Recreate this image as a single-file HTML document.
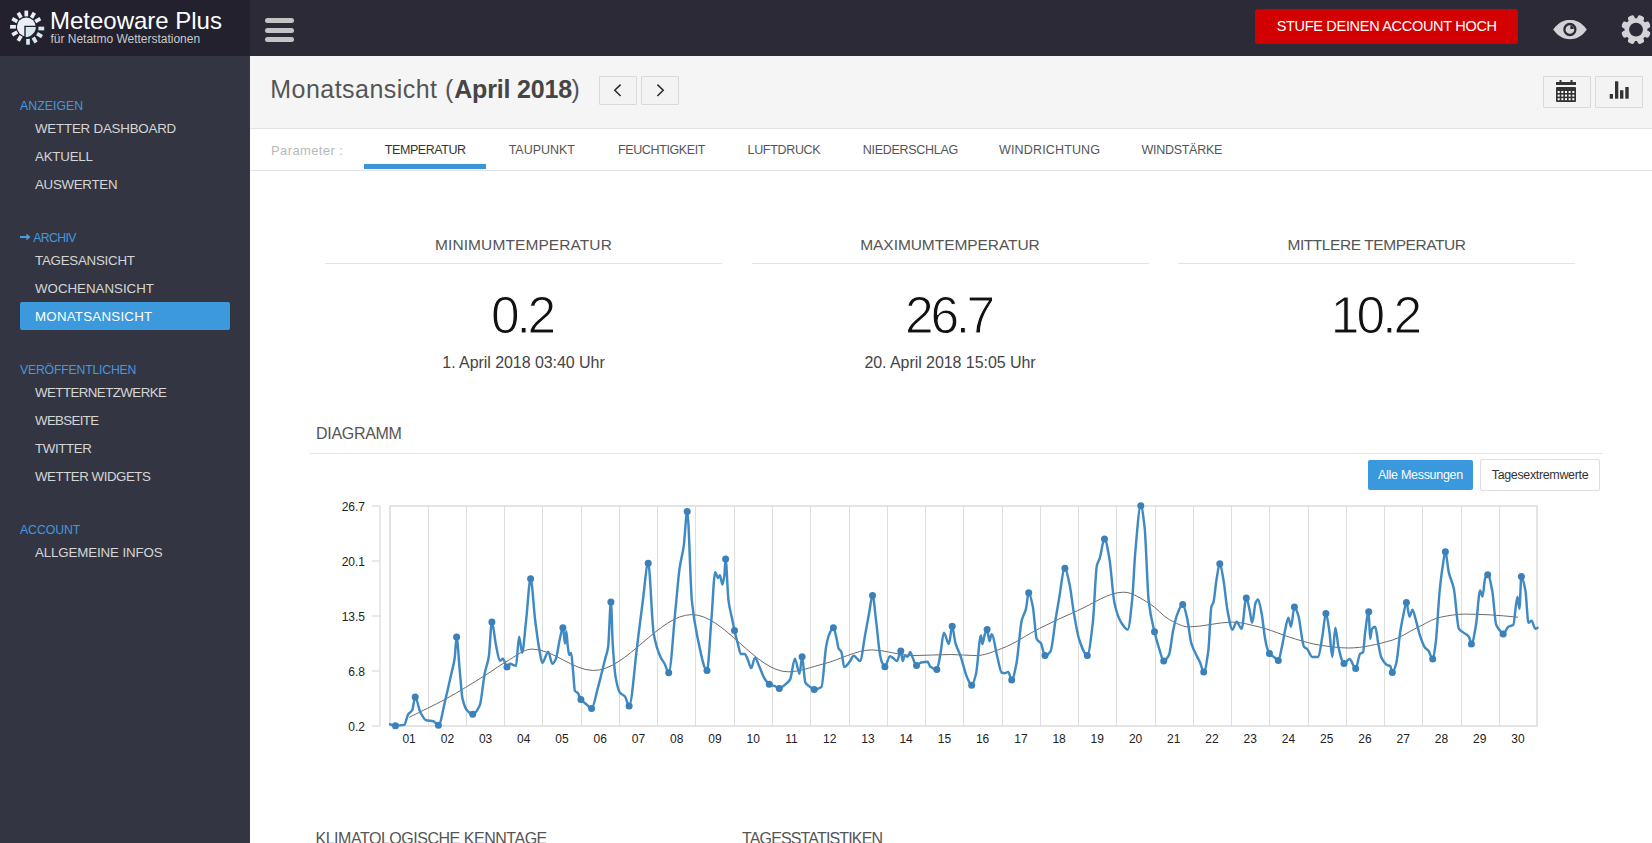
<!DOCTYPE html>
<html><head><meta charset="utf-8"><title>Monatsansicht</title>
<style>
*{margin:0;padding:0;box-sizing:border-box}
html,body{width:1652px;height:843px;overflow:hidden;background:#fff;font-family:"Liberation Sans", sans-serif;position:relative}
.t{position:absolute;white-space:nowrap;line-height:1}
.r{position:absolute}
</style></head><body>
<div class="r" style="left:0px;top:0px;width:1652px;height:56px;background:#2b2a36;"></div>
<div class="r" style="left:0px;top:0px;width:250px;height:56px;background:#22212d;"></div>
<div class="r" style="left:0px;top:56px;width:250px;height:787px;background:#333642;"></div>
<div class="r" style="left:248px;top:56px;width:2px;height:787px;background:#363543;"></div>
<div class="r" style="left:250px;top:56px;width:1402px;height:72px;background:#f5f5f5;"></div>
<div class="r" style="left:250px;top:128px;width:1402px;height:1px;background:#e3e3e3;"></div>
<div class="r" style="left:250px;top:170px;width:1402px;height:1px;background:#e3e3e3;"></div>
<svg class="r" style="left:0;top:0" width="56" height="56" viewBox="0 0 56 56"><rect x="24.45" y="10.60" width="3.7" height="5.8" fill="#eaeff6" transform="rotate(0 26.30 26.80)"/><rect x="24.45" y="10.60" width="3.7" height="5.8" fill="#eaeff6" transform="rotate(30 26.30 26.80)"/><rect x="24.45" y="10.60" width="3.7" height="5.8" fill="#eaeff6" transform="rotate(60 26.30 26.80)"/><rect x="26.15" y="12.30" width="3.7" height="5.8" fill="#d3e8f0" transform="rotate(90 28.00 28.50)"/><rect x="26.15" y="12.30" width="3.7" height="5.8" fill="#d3e8f0" transform="rotate(120 28.00 28.50)"/><rect x="26.15" y="12.30" width="3.7" height="5.8" fill="#d3e8f0" transform="rotate(150 28.00 28.50)"/><rect x="26.15" y="12.30" width="3.7" height="5.8" fill="#d3e8f0" transform="rotate(180 28.00 28.50)"/><rect x="24.45" y="10.60" width="3.7" height="5.8" fill="#eaeff6" transform="rotate(210 26.30 26.80)"/><rect x="24.45" y="10.60" width="3.7" height="5.8" fill="#eaeff6" transform="rotate(240 26.30 26.80)"/><rect x="24.45" y="10.60" width="3.7" height="5.8" fill="#eaeff6" transform="rotate(270 26.30 26.80)"/><rect x="24.45" y="10.60" width="3.7" height="5.8" fill="#eaeff6" transform="rotate(300 26.30 26.80)"/><rect x="24.45" y="10.60" width="3.7" height="5.8" fill="#eaeff6" transform="rotate(330 26.30 26.80)"/><circle cx="26.3" cy="26.8" r="9.4" fill="#eaeff6"/><path d="M25.00 26.40 h11.6 a11.6 11.6 0 0 1 -11.6 11.6 z" fill="#d3e8f0" stroke="#22212d" stroke-width="1.4"/></svg>
<div class="t" style="left:50px;top:8.88px;font-size:24px;color:#ffffff;letter-spacing:-0.014px;">Meteoware Plus</div>
<div class="t" style="left:50.5px;top:32.64px;font-size:12px;color:#c9c9cc;letter-spacing:-0.011px;">für Netatmo Wetterstationen</div>
<div class="r" style="left:265px;top:18px;width:29px;height:5px;background:#c4c4c4;border-radius:2.5px"></div>
<div class="r" style="left:265px;top:27.5px;width:29px;height:5px;background:#c4c4c4;border-radius:2.5px"></div>
<div class="r" style="left:265px;top:37px;width:29px;height:5px;background:#c4c4c4;border-radius:2.5px"></div>
<div class="r" style="left:1255px;top:9px;width:263px;height:35px;background:#d20000;border-radius:3px"></div>
<div class="t" style="left:1255.70px;width:262px;text-align:center;top:19.33px;font-size:14.5px;color:#ffffff;letter-spacing:-0.305px;">STUFE DEINEN ACCOUNT HOCH</div>
<svg class="r" style="left:1550px;top:16px" width="40" height="28" viewBox="0 0 40 28">
<path d="M3.2 13.6 C9 5.5 14.5 4 20 4 C25.5 4 31 5.5 36.8 13.6 C31 21.7 25.5 23.2 20 23.2 C14.5 23.2 9 21.7 3.2 13.6 Z" fill="#d3d3d7"/>
<circle cx="19.9" cy="13.5" r="5.5" fill="none" stroke="#2b2a36" stroke-width="2.3"/>
<path d="M20.4 9.6 A3.9 3.9 0 0 1 23.8 13.0 L20.4 13.0 Z" fill="#2b2a36"/>
</svg>
<svg class="r" style="left:1618px;top:12px" width="36" height="36" viewBox="0 0 36 36"><rect x="14.6" y="2.8000000000000007" width="6.8" height="7" rx="2.2" fill="#d3d3d7" transform="rotate(22.5 18 17.6)"/><rect x="14.6" y="2.8000000000000007" width="6.8" height="7" rx="2.2" fill="#d3d3d7" transform="rotate(67.5 18 17.6)"/><rect x="14.6" y="2.8000000000000007" width="6.8" height="7" rx="2.2" fill="#d3d3d7" transform="rotate(112.5 18 17.6)"/><rect x="14.6" y="2.8000000000000007" width="6.8" height="7" rx="2.2" fill="#d3d3d7" transform="rotate(157.5 18 17.6)"/><rect x="14.6" y="2.8000000000000007" width="6.8" height="7" rx="2.2" fill="#d3d3d7" transform="rotate(202.5 18 17.6)"/><rect x="14.6" y="2.8000000000000007" width="6.8" height="7" rx="2.2" fill="#d3d3d7" transform="rotate(247.5 18 17.6)"/><rect x="14.6" y="2.8000000000000007" width="6.8" height="7" rx="2.2" fill="#d3d3d7" transform="rotate(292.5 18 17.6)"/><rect x="14.6" y="2.8000000000000007" width="6.8" height="7" rx="2.2" fill="#d3d3d7" transform="rotate(337.5 18 17.6)"/><circle cx="18" cy="17.6" r="11.4" fill="#d3d3d7"/><circle cx="18" cy="17.6" r="6.9" fill="#2b2a36"/></svg>
<div class="t" style="left:20px;top:100.19px;font-size:12.3px;color:#4398de;letter-spacing:0.046px;">ANZEIGEN</div>
<div class="t" style="left:35px;top:121.74px;font-size:13.3px;color:#d6d6d6;letter-spacing:-0.190px;">WETTER DASHBOARD</div>
<div class="t" style="left:35px;top:149.74px;font-size:13.3px;color:#d6d6d6;letter-spacing:-0.204px;">AKTUELL</div>
<div class="t" style="left:35px;top:177.74px;font-size:13.3px;color:#d6d6d6;letter-spacing:-0.277px;">AUSWERTEN</div>
<svg class="r" style="left:18px;top:231px" width="14" height="12"><path d="M2 5 h6.5 v-2.6 l4 3.6 l-4 3.6 v-2.6 h-6.5 z" fill="#4a9de0"/></svg>
<div class="t" style="left:33.2px;top:232.19px;font-size:12.3px;color:#4398de;letter-spacing:-0.632px;">ARCHIV</div>
<div class="t" style="left:35px;top:253.74px;font-size:13.3px;color:#d6d6d6;letter-spacing:-0.230px;">TAGESANSICHT</div>
<div class="t" style="left:35px;top:281.74px;font-size:13.3px;color:#d6d6d6;letter-spacing:-0.001px;">WOCHENANSICHT</div>
<div class="r" style="left:20px;top:302px;width:210px;height:28px;background:#3b99dc;border-radius:2px"></div>
<div class="t" style="left:35px;top:309.74px;font-size:13.3px;color:#ffffff;letter-spacing:0.239px;">MONATSANSICHT</div>
<div class="t" style="left:20px;top:364.19px;font-size:12.3px;color:#4398de;letter-spacing:-0.227px;">VERÖFFENTLICHEN</div>
<div class="t" style="left:35px;top:385.74px;font-size:13.3px;color:#d6d6d6;letter-spacing:-0.553px;">WETTERNETZWERKE</div>
<div class="t" style="left:35px;top:413.74px;font-size:13.3px;color:#d6d6d6;letter-spacing:-0.649px;">WEBSEITE</div>
<div class="t" style="left:35px;top:441.74px;font-size:13.3px;color:#d6d6d6;letter-spacing:-0.363px;">TWITTER</div>
<div class="t" style="left:35px;top:469.74px;font-size:13.3px;color:#d6d6d6;letter-spacing:-0.462px;">WETTER WIDGETS</div>
<div class="t" style="left:20px;top:524.19px;font-size:12.3px;color:#4398de;letter-spacing:-0.081px;">ACCOUNT</div>
<div class="t" style="left:35px;top:545.74px;font-size:13.3px;color:#d6d6d6;letter-spacing:-0.116px;">ALLGEMEINE INFOS</div>
<div class="t" style="left:270.3px;top:76.74px;font-size:25px;color:#555555;letter-spacing:0.46px">Monatsansicht (</div>
<div class="t" style="left:454.2px;top:76.74px;font-size:25px;color:#454545;letter-spacing:-0.178px;font-weight:bold">April 2018</div>
<div class="t" style="left:571.6px;top:76.74px;font-size:25px;color:#555555;">)</div>
<div class="r" style="left:599px;top:76px;width:38px;height:28.6px;background:#f3f3f3;border:1px solid #d9d9d9;border-radius:1px;box-sizing:border-box"></div>
<div class="r" style="left:641px;top:76px;width:38px;height:28.6px;background:#f3f3f3;border:1px solid #d9d9d9;border-radius:1px;box-sizing:border-box"></div>
<svg class="r" style="left:599px;top:76px" width="80" height="29"><path d="M21.6 8.6 L15.8 14.3 L21.6 20" fill="none" stroke="#2a2a2a" stroke-width="1.55"/><path d="M58.4 8.6 L64.2 14.3 L58.4 20" fill="none" stroke="#2a2a2a" stroke-width="1.55"/></svg>
<div class="r" style="left:1543px;top:76px;width:48px;height:32px;background:#f3f3f3;border:1px solid #d9d9d9;border-radius:1px;box-sizing:border-box"></div>
<div class="r" style="left:1595px;top:76px;width:48px;height:32px;background:#f3f3f3;border:1px solid #d9d9d9;border-radius:1px;box-sizing:border-box"></div>
<svg class="r" style="left:1543px;top:76px" width="48" height="32"><rect x="13" y="6" width="20" height="3" fill="#333"/><rect x="16.5" y="4" width="2" height="3" fill="#333"/><rect x="27.5" y="4" width="2" height="3" fill="#333"/><rect x="13" y="11" width="20" height="15" rx="1" fill="#333"/><rect x="14.70" y="15.00" width="2" height="2" fill="#fff"/><rect x="18.35" y="15.00" width="2" height="2" fill="#fff"/><rect x="22.00" y="15.00" width="2" height="2" fill="#fff"/><rect x="25.65" y="15.00" width="2" height="2" fill="#fff"/><rect x="29.30" y="15.00" width="2" height="2" fill="#fff"/><rect x="14.70" y="18.60" width="2" height="2" fill="#fff"/><rect x="18.35" y="18.60" width="2" height="2" fill="#fff"/><rect x="22.00" y="18.60" width="2" height="2" fill="#fff"/><rect x="25.65" y="18.60" width="2" height="2" fill="#fff"/><rect x="29.30" y="18.60" width="2" height="2" fill="#fff"/><rect x="14.70" y="22.20" width="2" height="2" fill="#fff"/><rect x="18.35" y="22.20" width="2" height="2" fill="#fff"/><rect x="22.00" y="22.20" width="2" height="2" fill="#fff"/><rect x="25.65" y="22.20" width="2" height="2" fill="#fff"/><rect x="29.30" y="22.20" width="2" height="2" fill="#fff"/></svg>
<svg class="r" style="left:1595px;top:76px" width="48" height="32"><rect x="14.7" y="18" width="3.3" height="4.7" fill="#333"/><rect x="20" y="5.3" width="3.3" height="17.4" fill="#333"/><rect x="25" y="14.2" width="3.4" height="8.5" fill="#333"/><rect x="30.3" y="11" width="3.4" height="11.7" fill="#333"/></svg>
<div class="t" style="left:271px;top:143.50px;font-size:13px;color:#b9b9b9;letter-spacing:0.390px;">Parameter :</div>
<div class="t" style="left:384.8px;top:143.92px;font-size:12.5px;color:#333;letter-spacing:-0.429px;">TEMPERATUR</div>
<div class="t" style="left:508.7px;top:143.92px;font-size:12.5px;color:#555;letter-spacing:-0.029px;">TAUPUNKT</div>
<div class="t" style="left:618px;top:143.92px;font-size:12.5px;color:#555;letter-spacing:-0.385px;">FEUCHTIGKEIT</div>
<div class="t" style="left:747.5px;top:143.92px;font-size:12.5px;color:#555;letter-spacing:-0.320px;">LUFTDRUCK</div>
<div class="t" style="left:862.7px;top:143.92px;font-size:12.5px;color:#555;letter-spacing:-0.274px;">NIEDERSCHLAG</div>
<div class="t" style="left:999px;top:143.92px;font-size:12.5px;color:#555;letter-spacing:0.157px;">WINDRICHTUNG</div>
<div class="t" style="left:1141.4px;top:143.92px;font-size:12.5px;color:#555;letter-spacing:-0.267px;">WINDSTÄRKE</div>
<div class="r" style="left:364px;top:164px;width:122px;height:5px;background:#3a95d9;"></div>
<div class="t" style="left:325.00px;width:397px;text-align:center;top:236.68px;font-size:15.5px;color:#555;letter-spacing:0.089px;">MINIMUMTEMPERATUR</div>
<div class="r" style="left:325.0px;top:263px;width:397px;height:1px;background:#e4e4e4;"></div>
<div class="t" style="left:325.00px;width:397px;text-align:center;top:290.21px;font-size:51.5px;color:#111;letter-spacing:-3.175px;text-indent:-3px;-webkit-text-stroke:1.0px #fff">0.2</div>
<div class="t" style="left:325.00px;width:397px;text-align:center;top:354.56px;font-size:16px;color:#444;letter-spacing:-0.055px;">1. April 2018 03:40 Uhr</div>
<div class="t" style="left:751.50px;width:397px;text-align:center;top:236.68px;font-size:15.5px;color:#555;letter-spacing:-0.059px;">MAXIMUMTEMPERATUR</div>
<div class="r" style="left:751.5px;top:263px;width:397px;height:1px;background:#e4e4e4;"></div>
<div class="t" style="left:751.50px;width:397px;text-align:center;top:290.21px;font-size:51.5px;color:#111;letter-spacing:-3.364px;text-indent:-3px;-webkit-text-stroke:1.0px #fff">26.7</div>
<div class="t" style="left:751.50px;width:397px;text-align:center;top:354.56px;font-size:16px;color:#444;letter-spacing:-0.057px;">20. April 2018 15:05 Uhr</div>
<div class="t" style="left:1178.00px;width:397px;text-align:center;top:236.68px;font-size:15.5px;color:#555;letter-spacing:-0.427px;">MITTLERE TEMPERATUR</div>
<div class="r" style="left:1178.0px;top:263px;width:397px;height:1px;background:#e4e4e4;"></div>
<div class="t" style="left:1178.00px;width:397px;text-align:center;top:290.21px;font-size:51.5px;color:#111;letter-spacing:-2.897px;text-indent:-3px;-webkit-text-stroke:1.0px #fff">10.2</div>
<div class="t" style="left:316px;top:426.26px;font-size:16px;color:#555;letter-spacing:-0.296px;">DIAGRAMM</div>
<div class="r" style="left:310px;top:453px;width:1293px;height:1px;background:#e4e4e4;"></div>
<div class="r" style="left:1368px;top:460px;width:105px;height:30px;background:#3a98dc;border-radius:2px"></div>
<div class="t" style="left:1368.00px;width:105px;text-align:center;top:468.82px;font-size:12.5px;color:#ffffff;letter-spacing:-0.291px;">Alle Messungen</div>
<div class="r" style="left:1480px;top:459px;width:120px;height:32px;background:#ffffff;border:1px solid #dedede;border-radius:2px;box-sizing:border-box"></div>
<div class="t" style="left:1480.00px;width:120px;text-align:center;top:468.82px;font-size:12.5px;color:#333;letter-spacing:-0.351px;">Tagesextremwerte</div>
<svg class="r" style="left:0;top:0" width="1652" height="843" viewBox="0 0 1652 843"><line x1="428.5" y1="506" x2="428.5" y2="726" stroke="#dedede" stroke-width="1"/><line x1="466.5" y1="506" x2="466.5" y2="726" stroke="#dedede" stroke-width="1"/><line x1="504.5" y1="506" x2="504.5" y2="726" stroke="#dedede" stroke-width="1"/><line x1="542.5" y1="506" x2="542.5" y2="726" stroke="#dedede" stroke-width="1"/><line x1="581.5" y1="506" x2="581.5" y2="726" stroke="#dedede" stroke-width="1"/><line x1="619.5" y1="506" x2="619.5" y2="726" stroke="#dedede" stroke-width="1"/><line x1="657.5" y1="506" x2="657.5" y2="726" stroke="#dedede" stroke-width="1"/><line x1="695.5" y1="506" x2="695.5" y2="726" stroke="#dedede" stroke-width="1"/><line x1="734.5" y1="506" x2="734.5" y2="726" stroke="#dedede" stroke-width="1"/><line x1="772.5" y1="506" x2="772.5" y2="726" stroke="#dedede" stroke-width="1"/><line x1="810.5" y1="506" x2="810.5" y2="726" stroke="#dedede" stroke-width="1"/><line x1="849.5" y1="506" x2="849.5" y2="726" stroke="#dedede" stroke-width="1"/><line x1="887.5" y1="506" x2="887.5" y2="726" stroke="#dedede" stroke-width="1"/><line x1="925.5" y1="506" x2="925.5" y2="726" stroke="#dedede" stroke-width="1"/><line x1="963.5" y1="506" x2="963.5" y2="726" stroke="#dedede" stroke-width="1"/><line x1="1002.5" y1="506" x2="1002.5" y2="726" stroke="#dedede" stroke-width="1"/><line x1="1040.5" y1="506" x2="1040.5" y2="726" stroke="#dedede" stroke-width="1"/><line x1="1078.5" y1="506" x2="1078.5" y2="726" stroke="#dedede" stroke-width="1"/><line x1="1116.5" y1="506" x2="1116.5" y2="726" stroke="#dedede" stroke-width="1"/><line x1="1155.5" y1="506" x2="1155.5" y2="726" stroke="#dedede" stroke-width="1"/><line x1="1193.5" y1="506" x2="1193.5" y2="726" stroke="#dedede" stroke-width="1"/><line x1="1231.5" y1="506" x2="1231.5" y2="726" stroke="#dedede" stroke-width="1"/><line x1="1269.5" y1="506" x2="1269.5" y2="726" stroke="#dedede" stroke-width="1"/><line x1="1308.5" y1="506" x2="1308.5" y2="726" stroke="#dedede" stroke-width="1"/><line x1="1346.5" y1="506" x2="1346.5" y2="726" stroke="#dedede" stroke-width="1"/><line x1="1384.5" y1="506" x2="1384.5" y2="726" stroke="#dedede" stroke-width="1"/><line x1="1422.5" y1="506" x2="1422.5" y2="726" stroke="#dedede" stroke-width="1"/><line x1="1461.5" y1="506" x2="1461.5" y2="726" stroke="#dedede" stroke-width="1"/><line x1="1499.5" y1="506" x2="1499.5" y2="726" stroke="#dedede" stroke-width="1"/><rect x="390" y="506" width="1147" height="220" fill="none" stroke="#dedede" stroke-width="1.6"/><line x1="380" y1="506" x2="380" y2="726" stroke="#dedede" stroke-width="1.3"/><line x1="372" y1="506.0" x2="380" y2="506.0" stroke="#dedede" stroke-width="1.3"/><text x="365" y="511.0" text-anchor="end" font-family="Liberation Sans" font-size="12" fill="#222">26.7</text><line x1="372" y1="561.0" x2="380" y2="561.0" stroke="#dedede" stroke-width="1.3"/><text x="365" y="566.0" text-anchor="end" font-family="Liberation Sans" font-size="12" fill="#222">20.1</text><line x1="372" y1="616.0" x2="380" y2="616.0" stroke="#dedede" stroke-width="1.3"/><text x="365" y="621.0" text-anchor="end" font-family="Liberation Sans" font-size="12" fill="#222">13.5</text><line x1="372" y1="671.0" x2="380" y2="671.0" stroke="#dedede" stroke-width="1.3"/><text x="365" y="676.0" text-anchor="end" font-family="Liberation Sans" font-size="12" fill="#222">6.8</text><line x1="372" y1="726.0" x2="380" y2="726.0" stroke="#dedede" stroke-width="1.3"/><text x="365" y="731.0" text-anchor="end" font-family="Liberation Sans" font-size="12" fill="#222">0.2</text><text x="409.1" y="743" text-anchor="middle" font-family="Liberation Sans" font-size="12" fill="#222">01</text><text x="447.4" y="743" text-anchor="middle" font-family="Liberation Sans" font-size="12" fill="#222">02</text><text x="485.6" y="743" text-anchor="middle" font-family="Liberation Sans" font-size="12" fill="#222">03</text><text x="523.8" y="743" text-anchor="middle" font-family="Liberation Sans" font-size="12" fill="#222">04</text><text x="562.0" y="743" text-anchor="middle" font-family="Liberation Sans" font-size="12" fill="#222">05</text><text x="600.3" y="743" text-anchor="middle" font-family="Liberation Sans" font-size="12" fill="#222">06</text><text x="638.5" y="743" text-anchor="middle" font-family="Liberation Sans" font-size="12" fill="#222">07</text><text x="676.8" y="743" text-anchor="middle" font-family="Liberation Sans" font-size="12" fill="#222">08</text><text x="715.0" y="743" text-anchor="middle" font-family="Liberation Sans" font-size="12" fill="#222">09</text><text x="753.2" y="743" text-anchor="middle" font-family="Liberation Sans" font-size="12" fill="#222">10</text><text x="791.5" y="743" text-anchor="middle" font-family="Liberation Sans" font-size="12" fill="#222">11</text><text x="829.7" y="743" text-anchor="middle" font-family="Liberation Sans" font-size="12" fill="#222">12</text><text x="867.9" y="743" text-anchor="middle" font-family="Liberation Sans" font-size="12" fill="#222">13</text><text x="906.1" y="743" text-anchor="middle" font-family="Liberation Sans" font-size="12" fill="#222">14</text><text x="944.4" y="743" text-anchor="middle" font-family="Liberation Sans" font-size="12" fill="#222">15</text><text x="982.6" y="743" text-anchor="middle" font-family="Liberation Sans" font-size="12" fill="#222">16</text><text x="1020.9" y="743" text-anchor="middle" font-family="Liberation Sans" font-size="12" fill="#222">17</text><text x="1059.1" y="743" text-anchor="middle" font-family="Liberation Sans" font-size="12" fill="#222">18</text><text x="1097.3" y="743" text-anchor="middle" font-family="Liberation Sans" font-size="12" fill="#222">19</text><text x="1135.6" y="743" text-anchor="middle" font-family="Liberation Sans" font-size="12" fill="#222">20</text><text x="1173.8" y="743" text-anchor="middle" font-family="Liberation Sans" font-size="12" fill="#222">21</text><text x="1212.0" y="743" text-anchor="middle" font-family="Liberation Sans" font-size="12" fill="#222">22</text><text x="1250.2" y="743" text-anchor="middle" font-family="Liberation Sans" font-size="12" fill="#222">23</text><text x="1288.5" y="743" text-anchor="middle" font-family="Liberation Sans" font-size="12" fill="#222">24</text><text x="1326.7" y="743" text-anchor="middle" font-family="Liberation Sans" font-size="12" fill="#222">25</text><text x="1365.0" y="743" text-anchor="middle" font-family="Liberation Sans" font-size="12" fill="#222">26</text><text x="1403.2" y="743" text-anchor="middle" font-family="Liberation Sans" font-size="12" fill="#222">27</text><text x="1441.4" y="743" text-anchor="middle" font-family="Liberation Sans" font-size="12" fill="#222">28</text><text x="1479.7" y="743" text-anchor="middle" font-family="Liberation Sans" font-size="12" fill="#222">29</text><text x="1517.9" y="743" text-anchor="middle" font-family="Liberation Sans" font-size="12" fill="#222">30</text><path d="M409.20 717.30 C421.30 711.23 433.40 705.70 445.50 699.10 C458.93 691.77 472.37 683.31 485.80 674.90 C492.53 670.68 499.27 665.56 506.00 661.80 C514.73 656.92 523.47 649.10 532.20 649.10 C552.67 649.10 573.13 670.50 593.60 670.50 C626.37 670.50 659.13 614.60 691.90 614.60 C723.93 614.60 755.97 671.80 788.00 671.80 C799.87 671.80 811.73 666.86 823.60 663.90 C839.70 659.88 855.80 649.90 871.90 649.90 C885.47 649.90 899.03 655.60 912.60 655.60 C925.30 655.60 938.00 654.50 950.70 654.50 C959.17 654.50 967.63 655.60 976.10 655.60 C984.57 655.60 993.03 651.61 1001.50 648.60 C1014.23 644.07 1026.97 634.63 1039.70 628.30 C1052.40 621.99 1065.10 615.98 1077.80 610.50 C1093.07 603.91 1108.33 592.20 1123.60 592.20 C1132.40 592.20 1141.20 598.78 1150.00 603.90 C1156.47 607.66 1162.93 616.27 1169.40 619.60 C1175.83 622.92 1182.27 626.90 1188.70 626.90 C1203.23 626.90 1217.77 622.10 1232.30 622.10 C1241.20 622.10 1250.10 624.85 1259.00 626.90 C1271.10 629.68 1283.20 635.56 1295.30 639.00 C1303.37 641.29 1311.43 643.93 1319.50 645.10 C1329.17 646.50 1338.83 648.00 1348.50 648.00 C1363.03 648.00 1377.57 644.21 1392.10 640.20 C1400.17 637.97 1408.23 631.91 1416.30 628.10 C1424.40 624.27 1432.50 618.81 1440.60 617.20 C1448.67 615.59 1456.73 614.10 1464.80 614.10 C1472.87 614.10 1480.93 614.46 1489.00 614.80 C1498.67 615.21 1508.33 616.40 1518.00 617.20" fill="none" stroke="#6a6a6a" stroke-width="1"/><path d="M390.00 724.30 C391.83 724.77 393.67 725.70 395.50 725.70 C398.40 725.70 401.30 725.48 404.20 724.90 C405.53 724.63 406.87 716.14 408.20 714.20 C409.53 712.26 410.87 712.44 412.20 710.20 C413.20 708.52 414.20 697.10 415.20 697.10 C416.90 697.10 418.60 709.02 420.30 712.20 C422.30 715.95 424.30 719.78 426.30 720.30 C428.67 720.92 431.03 720.71 433.40 721.30 C435.07 721.72 436.73 725.30 438.40 725.30 C440.77 725.30 443.13 708.59 445.50 699.10 C447.50 691.08 449.50 681.83 451.50 672.90 C452.53 668.29 453.57 665.63 454.60 658.80 C455.27 654.39 455.93 637.00 456.60 637.00 C457.60 637.00 458.60 658.56 459.60 668.90 C460.60 679.24 461.60 695.04 462.60 699.10 C464.30 706.00 466.00 709.57 467.70 711.20 C469.37 712.79 471.03 714.20 472.70 714.20 C475.07 714.20 477.43 710.42 479.80 705.20 C481.47 701.52 483.13 681.10 484.80 672.90 C486.13 666.34 487.47 664.87 488.80 656.80 C489.83 650.55 490.87 621.90 491.90 621.90 C493.23 621.90 494.57 638.41 495.90 644.70 C497.23 650.99 498.57 660.80 499.90 660.80 C500.90 660.80 501.90 658.80 502.90 658.80 C504.27 658.80 505.63 666.90 507.00 666.90 C508.00 666.90 509.00 663.80 510.00 663.80 C512.00 663.80 514.00 665.80 516.00 665.80 C517.03 665.80 518.07 636.60 519.10 636.60 C520.10 636.60 521.10 652.70 522.10 652.70 C523.43 652.70 524.77 631.97 526.10 620.50 C527.60 607.59 529.10 578.80 530.60 578.80 C532.13 578.80 533.67 608.37 535.20 620.50 C536.53 631.04 537.87 641.39 539.20 648.70 C540.23 654.36 541.27 662.80 542.30 662.80 C544.30 662.80 546.30 651.70 548.30 651.70 C549.63 651.70 550.97 663.80 552.30 663.80 C553.50 663.80 554.70 661.34 555.90 658.70 C557.17 655.92 558.43 645.11 559.70 639.70 C560.77 635.15 561.83 627.70 562.90 627.70 C563.60 627.70 564.30 643.50 565.00 643.50 C565.43 643.50 565.87 631.20 566.30 631.20 C566.77 631.20 567.23 641.75 567.70 645.40 C568.20 649.31 568.70 654.90 569.20 654.90 C569.83 654.90 570.47 653.00 571.10 653.00 C571.73 653.00 572.37 663.84 573.00 670.10 C573.63 676.36 574.27 690.04 574.90 690.90 C575.83 692.16 576.77 691.85 577.70 692.80 C578.77 693.88 579.83 698.14 580.90 699.50 C582.70 701.79 584.50 702.71 586.30 704.20 C588.07 705.67 589.83 708.40 591.60 708.40 C593.60 708.40 595.60 696.11 597.60 689.00 C600.13 679.99 602.67 668.72 605.20 658.70 C606.17 654.88 607.13 653.43 608.10 647.30 C609.03 641.38 609.97 602.10 610.90 602.10 C611.53 602.10 612.17 635.71 612.80 645.40 C613.77 660.19 614.73 672.24 615.70 677.60 C617.13 685.55 618.57 691.02 620.00 692.80 C621.67 694.87 623.33 694.60 625.00 696.50 C626.37 698.06 627.73 706.00 629.10 706.00 C631.83 706.00 634.57 665.69 637.30 644.60 C639.13 630.45 640.97 614.61 642.80 601.00 C644.60 587.64 646.40 563.30 648.20 563.30 C650.03 563.30 651.87 623.62 653.70 633.70 C655.97 646.17 658.23 651.98 660.50 656.90 C661.87 659.87 663.23 661.12 664.60 663.70 C665.97 666.28 667.33 672.70 668.70 672.70 C670.97 672.70 673.23 631.04 675.50 609.10 C676.87 595.87 678.23 577.68 679.60 568.20 C680.97 558.72 682.33 555.96 683.70 546.40 C684.87 538.24 686.03 511.50 687.20 511.50 C688.77 511.50 690.33 585.55 691.90 601.00 C693.70 618.76 695.50 627.93 697.30 636.40 C700.53 651.61 703.77 670.40 707.00 670.40 C708.47 670.40 709.93 637.29 711.40 619.70 C712.67 604.51 713.93 572.30 715.20 572.30 C716.13 572.30 717.07 578.00 718.00 578.00 C718.63 578.00 719.27 575.10 719.90 575.10 C720.73 575.10 721.57 584.60 722.40 584.60 C723.03 584.60 723.67 580.46 724.30 576.10 C724.73 573.11 725.17 559.00 725.60 559.00 C726.57 559.00 727.53 593.37 728.50 600.70 C729.77 610.31 731.03 613.43 732.30 619.70 C733.03 623.33 733.77 627.25 734.50 630.50 C735.67 635.66 736.83 640.14 738.00 644.40 C738.93 647.81 739.87 653.90 740.80 653.90 C742.07 653.90 743.33 653.90 744.60 653.90 C745.53 653.90 746.47 656.74 747.40 658.60 C748.67 661.12 749.93 668.10 751.20 668.10 C752.47 668.10 753.73 657.60 755.00 657.60 C756.27 657.60 757.53 662.49 758.80 665.20 C760.70 669.27 762.60 675.54 764.50 678.50 C766.10 681.00 767.70 683.35 769.30 684.20 C771.20 685.21 773.10 685.31 775.00 686.10 C776.43 686.70 777.87 688.40 779.30 688.40 C781.00 688.40 782.70 686.51 784.40 685.20 C786.30 683.74 788.20 682.65 790.10 679.50 C791.70 676.85 793.30 658.60 794.90 658.60 C796.47 658.60 798.03 673.80 799.60 673.80 C800.43 673.80 801.27 656.70 802.10 656.70 C803.17 656.70 804.23 680.36 805.30 682.30 C806.57 684.60 807.83 685.08 809.10 686.10 C810.80 687.47 812.50 689.50 814.20 689.50 C816.60 689.50 819.00 688.74 821.40 687.10 C823.00 686.01 824.60 654.85 826.20 646.30 C827.13 641.32 828.07 637.15 829.00 634.90 C830.47 631.36 831.93 627.70 833.40 627.70 C834.47 627.70 835.53 634.28 836.60 638.70 C837.23 641.32 837.87 646.83 838.50 648.20 C839.47 650.29 840.43 649.95 841.40 652.00 C842.33 653.97 843.27 667.10 844.20 667.10 C846.10 667.10 848.00 663.69 849.90 661.40 C851.17 659.87 852.43 655.80 853.70 655.80 C854.97 655.80 856.23 657.93 857.50 659.00 C858.33 659.70 859.17 661.10 860.00 661.10 C861.67 661.10 863.33 644.29 865.00 635.50 C866.40 628.12 867.80 620.16 869.20 612.70 C870.30 606.84 871.40 595.40 872.50 595.40 C873.77 595.40 875.03 612.73 876.30 622.70 C877.50 632.15 878.70 647.58 879.90 654.00 C880.60 657.75 881.30 660.94 882.00 662.50 C882.97 664.65 883.93 666.80 884.90 666.80 C886.57 666.80 888.23 656.10 889.90 656.10 C891.07 656.10 892.23 657.49 893.40 658.30 C894.60 659.13 895.80 661.10 897.00 661.10 C898.27 661.10 899.53 650.90 900.80 650.90 C901.43 650.90 902.07 661.10 902.70 661.10 C903.40 661.10 904.10 655.40 904.80 655.40 C905.77 655.40 906.73 656.80 907.70 656.80 C908.53 656.80 909.37 651.90 910.20 651.90 C911.00 651.90 911.80 655.85 912.60 657.60 C913.90 660.44 915.20 665.40 916.50 665.40 C918.07 665.40 919.63 662.80 921.20 662.50 C923.33 662.09 925.47 661.80 927.60 661.80 C928.53 661.80 929.47 666.13 930.40 666.80 C932.53 668.34 934.67 669.40 936.80 669.40 C938.00 669.40 939.20 660.03 940.40 654.00 C941.57 648.13 942.73 632.70 943.90 632.70 C945.57 632.70 947.23 644.00 948.90 644.00 C950.00 644.00 951.10 626.30 952.20 626.30 C953.23 626.30 954.27 638.94 955.30 642.60 C956.97 648.50 958.63 650.68 960.30 655.40 C962.67 662.10 965.03 673.17 967.40 678.20 C968.83 681.25 970.27 685.30 971.70 685.30 C973.13 685.30 974.57 679.52 976.00 673.90 C977.63 667.50 979.27 635.50 980.90 635.50 C981.40 635.50 981.90 644.00 982.40 644.00 C983.10 644.00 983.80 637.58 984.50 635.50 C985.37 632.93 986.23 629.50 987.10 629.50 C987.90 629.50 988.70 641.20 989.50 641.20 C990.20 641.20 990.90 634.10 991.60 634.10 C993.50 634.10 995.40 649.58 997.30 656.80 C998.73 662.25 1000.17 671.96 1001.60 672.50 C1002.73 672.93 1003.87 673.20 1005.00 673.20 C1006.07 673.20 1007.13 671.90 1008.20 671.90 C1009.37 671.90 1010.53 680.10 1011.70 680.10 C1013.27 680.10 1014.83 671.26 1016.40 663.70 C1018.20 655.01 1020.00 627.19 1021.80 620.10 C1023.17 614.72 1024.53 614.24 1025.90 609.10 C1026.83 605.59 1027.77 592.80 1028.70 592.80 C1030.07 592.80 1031.43 599.93 1032.80 606.40 C1034.13 612.71 1035.47 636.87 1036.80 639.20 C1038.17 641.59 1039.53 641.19 1040.90 643.20 C1042.27 645.21 1043.63 655.50 1045.00 655.50 C1046.83 655.50 1048.67 653.85 1050.50 651.40 C1052.30 648.99 1054.10 628.16 1055.90 617.30 C1056.83 611.67 1057.77 606.20 1058.70 601.00 C1060.77 589.47 1062.83 568.20 1064.90 568.20 C1066.47 568.20 1068.03 577.37 1069.60 584.60 C1070.97 590.90 1072.33 604.00 1073.70 611.90 C1075.50 622.31 1077.30 633.91 1079.10 639.20 C1081.83 647.24 1084.57 655.50 1087.30 655.50 C1089.13 655.50 1090.97 638.40 1092.80 622.80 C1094.17 611.17 1095.53 571.07 1096.90 565.50 C1097.80 561.83 1098.70 561.43 1099.60 558.70 C1101.23 553.75 1102.87 539.00 1104.50 539.00 C1106.07 539.00 1107.63 548.98 1109.20 557.30 C1111.00 566.86 1112.80 595.93 1114.60 603.70 C1116.87 613.49 1119.13 619.29 1121.40 622.80 C1123.50 626.06 1125.60 629.60 1127.70 629.60 C1129.23 629.60 1130.77 613.23 1132.30 598.20 C1133.23 589.05 1134.17 565.26 1135.10 554.60 C1137.00 532.89 1138.90 505.80 1140.80 505.80 C1142.07 505.80 1143.33 516.47 1144.60 527.30 C1145.97 538.99 1147.33 589.44 1148.70 601.00 C1150.63 617.36 1152.57 623.55 1154.50 631.80 C1156.20 639.05 1157.90 644.94 1159.60 650.10 C1160.97 654.25 1162.33 661.00 1163.70 661.00 C1165.47 661.00 1167.23 658.40 1169.00 654.90 C1170.37 652.19 1171.73 637.24 1173.10 630.70 C1174.43 624.32 1175.77 617.99 1177.10 614.60 C1178.97 609.85 1180.83 604.50 1182.70 604.50 C1184.20 604.50 1185.70 612.37 1187.20 618.60 C1188.53 624.14 1189.87 638.20 1191.20 642.80 C1193.23 649.82 1195.27 652.53 1197.30 656.90 C1198.30 659.05 1199.30 660.70 1200.30 663.00 C1201.43 665.61 1202.57 672.10 1203.70 672.10 C1205.23 672.10 1206.77 661.96 1208.30 650.90 C1209.33 643.45 1210.37 609.94 1211.40 606.50 C1212.07 604.28 1212.73 604.52 1213.40 602.50 C1214.40 599.47 1215.40 586.19 1216.40 580.30 C1217.53 573.63 1218.67 563.80 1219.80 563.80 C1221.03 563.80 1222.27 573.40 1223.50 580.30 C1224.83 587.76 1226.17 603.74 1227.50 610.60 C1229.17 619.17 1230.83 629.70 1232.50 629.70 C1233.87 629.70 1235.23 621.70 1236.60 621.70 C1238.27 621.70 1239.93 628.70 1241.60 628.70 C1243.17 628.70 1244.73 597.90 1246.30 597.90 C1247.43 597.90 1248.57 605.69 1249.70 610.60 C1250.50 614.06 1251.30 622.70 1252.10 622.70 C1253.30 622.70 1254.50 604.85 1255.70 602.50 C1256.50 600.93 1257.30 599.50 1258.10 599.50 C1259.33 599.50 1260.57 608.05 1261.80 614.60 C1262.80 619.91 1263.80 630.87 1264.80 636.80 C1265.47 640.75 1266.13 644.61 1266.80 646.90 C1267.67 649.87 1268.53 652.42 1269.40 653.50 C1270.90 655.37 1272.40 655.84 1273.90 657.00 C1275.37 658.14 1276.83 660.40 1278.30 660.40 C1279.50 660.40 1280.70 652.16 1281.90 646.90 C1282.93 642.37 1283.97 635.29 1285.00 630.70 C1286.13 625.66 1287.27 617.60 1288.40 617.60 C1289.27 617.60 1290.13 626.70 1291.00 626.70 C1292.13 626.70 1293.27 607.10 1294.40 607.10 C1295.63 607.10 1296.87 611.09 1298.10 614.60 C1300.10 620.29 1302.10 644.72 1304.10 646.90 C1305.10 647.99 1306.10 648.00 1307.10 648.90 C1308.80 650.44 1310.50 656.90 1312.20 656.90 C1314.20 656.90 1316.20 656.90 1318.20 656.90 C1319.57 656.90 1320.93 644.43 1322.30 636.80 C1323.50 630.10 1324.70 613.60 1325.90 613.60 C1327.03 613.60 1328.17 623.43 1329.30 630.70 C1330.30 637.12 1331.30 656.90 1332.30 656.90 C1333.33 656.90 1334.37 627.70 1335.40 627.70 C1336.40 627.70 1337.40 642.71 1338.40 646.90 C1340.27 654.72 1342.13 663.40 1344.00 663.40 C1345.83 663.40 1347.67 659.00 1349.50 659.00 C1351.57 659.00 1353.63 668.60 1355.70 668.60 C1357.13 668.60 1358.57 655.50 1360.00 654.00 C1361.03 652.92 1362.07 653.33 1363.10 652.00 C1363.77 651.14 1364.43 637.87 1365.10 632.90 C1366.30 623.96 1367.50 611.70 1368.70 611.70 C1369.17 611.70 1369.63 638.90 1370.10 638.90 C1370.77 638.90 1371.43 629.61 1372.10 628.80 C1373.13 627.55 1374.17 626.80 1375.20 626.80 C1376.20 626.80 1377.20 637.97 1378.20 643.00 C1379.20 648.03 1380.20 654.91 1381.20 657.10 C1383.23 661.55 1385.27 664.09 1387.30 665.10 C1388.30 665.60 1389.30 665.46 1390.30 666.10 C1390.97 666.53 1391.63 672.60 1392.30 672.60 C1393.63 672.60 1394.97 667.96 1396.30 663.10 C1397.67 658.12 1399.03 639.44 1400.40 630.80 C1401.40 624.48 1402.40 619.31 1403.40 614.70 C1404.40 610.09 1405.40 602.60 1406.40 602.60 C1407.43 602.60 1408.47 616.70 1409.50 616.70 C1410.50 616.70 1411.50 609.70 1412.50 609.70 C1413.50 609.70 1414.50 615.37 1415.50 618.70 C1416.83 623.15 1418.17 629.78 1419.50 633.90 C1421.20 639.15 1422.90 644.60 1424.60 647.00 C1425.93 648.89 1427.27 649.23 1428.60 651.00 C1429.97 652.81 1431.33 659.10 1432.70 659.10 C1433.70 659.10 1434.70 650.47 1435.70 643.00 C1437.03 633.04 1438.37 603.67 1439.70 590.50 C1440.70 580.62 1441.70 572.73 1442.70 566.30 C1443.60 560.52 1444.50 551.80 1445.40 551.80 C1446.53 551.80 1447.67 567.54 1448.80 572.40 C1450.47 579.55 1452.13 580.88 1453.80 588.50 C1455.50 596.27 1457.20 626.28 1458.90 628.80 C1460.57 631.27 1462.23 631.56 1463.90 632.90 C1465.60 634.26 1467.30 634.63 1469.00 636.90 C1469.80 637.97 1470.60 644.00 1471.40 644.00 C1472.93 644.00 1474.47 633.39 1476.00 624.80 C1477.37 617.14 1478.73 590.50 1480.10 590.50 C1480.90 590.50 1481.70 596.60 1482.50 596.60 C1483.37 596.60 1484.23 580.40 1485.10 578.40 C1485.97 576.40 1486.83 574.80 1487.70 574.80 C1489.20 574.80 1490.70 583.00 1492.20 590.50 C1493.53 597.17 1494.87 621.40 1496.20 624.80 C1497.53 628.20 1498.87 629.18 1500.20 630.80 C1501.20 632.01 1502.20 633.90 1503.20 633.90 C1504.90 633.90 1506.60 627.85 1508.30 626.80 C1509.97 625.77 1511.63 626.10 1513.30 624.80 C1514.67 623.74 1516.03 596.60 1517.40 596.60 C1518.07 596.60 1518.73 608.70 1519.40 608.70 C1520.07 608.70 1520.73 576.40 1521.40 576.40 C1522.73 576.40 1524.07 583.33 1525.40 590.50 C1526.43 596.06 1527.47 622.80 1528.50 622.80 C1529.50 622.80 1530.50 620.80 1531.50 620.80 C1532.83 620.80 1534.17 628.80 1535.50 628.80 C1536.17 628.80 1536.83 628.13 1537.50 627.80" fill="none" stroke="#3f8ac2" stroke-width="2.45" stroke-linejoin="round" stroke-linecap="round"/><circle cx="395.5" cy="725.7" r="3.5" fill="#3b80b8"/><circle cx="415.2" cy="697.1" r="3.5" fill="#3b80b8"/><circle cx="438.4" cy="725.3" r="3.5" fill="#3b80b8"/><circle cx="456.6" cy="637.0" r="3.5" fill="#3b80b8"/><circle cx="472.7" cy="714.2" r="3.5" fill="#3b80b8"/><circle cx="491.9" cy="621.9" r="3.5" fill="#3b80b8"/><circle cx="507.0" cy="666.9" r="3.5" fill="#3b80b8"/><circle cx="530.6" cy="578.8" r="3.5" fill="#3b80b8"/><circle cx="562.9" cy="627.7" r="3.5" fill="#3b80b8"/><circle cx="580.9" cy="699.5" r="3.5" fill="#3b80b8"/><circle cx="591.6" cy="708.4" r="3.5" fill="#3b80b8"/><circle cx="610.9" cy="602.1" r="3.5" fill="#3b80b8"/><circle cx="629.1" cy="706.0" r="3.5" fill="#3b80b8"/><circle cx="648.2" cy="563.3" r="3.5" fill="#3b80b8"/><circle cx="668.7" cy="672.7" r="3.5" fill="#3b80b8"/><circle cx="687.2" cy="511.5" r="3.5" fill="#3b80b8"/><circle cx="707.0" cy="670.4" r="3.5" fill="#3b80b8"/><circle cx="725.6" cy="559.0" r="3.5" fill="#3b80b8"/><circle cx="734.5" cy="630.5" r="3.5" fill="#3b80b8"/><circle cx="769.3" cy="684.2" r="3.5" fill="#3b80b8"/><circle cx="779.3" cy="688.4" r="3.5" fill="#3b80b8"/><circle cx="802.1" cy="656.7" r="3.5" fill="#3b80b8"/><circle cx="814.2" cy="689.5" r="3.5" fill="#3b80b8"/><circle cx="833.4" cy="627.7" r="3.5" fill="#3b80b8"/><circle cx="872.5" cy="595.4" r="3.5" fill="#3b80b8"/><circle cx="884.9" cy="666.8" r="3.5" fill="#3b80b8"/><circle cx="900.8" cy="650.9" r="3.5" fill="#3b80b8"/><circle cx="916.5" cy="665.4" r="3.5" fill="#3b80b8"/><circle cx="936.8" cy="669.4" r="3.5" fill="#3b80b8"/><circle cx="952.2" cy="626.3" r="3.5" fill="#3b80b8"/><circle cx="971.7" cy="685.3" r="3.5" fill="#3b80b8"/><circle cx="987.1" cy="629.5" r="3.5" fill="#3b80b8"/><circle cx="1011.7" cy="680.1" r="3.5" fill="#3b80b8"/><circle cx="1028.7" cy="592.8" r="3.5" fill="#3b80b8"/><circle cx="1045.0" cy="655.5" r="3.5" fill="#3b80b8"/><circle cx="1064.9" cy="568.2" r="3.5" fill="#3b80b8"/><circle cx="1087.3" cy="655.5" r="3.5" fill="#3b80b8"/><circle cx="1104.5" cy="539.0" r="3.5" fill="#3b80b8"/><circle cx="1140.8" cy="505.8" r="3.5" fill="#3b80b8"/><circle cx="1154.5" cy="631.8" r="3.5" fill="#3b80b8"/><circle cx="1163.7" cy="661.0" r="3.5" fill="#3b80b8"/><circle cx="1182.7" cy="604.5" r="3.5" fill="#3b80b8"/><circle cx="1203.7" cy="672.1" r="3.5" fill="#3b80b8"/><circle cx="1219.8" cy="563.8" r="3.5" fill="#3b80b8"/><circle cx="1246.3" cy="597.9" r="3.5" fill="#3b80b8"/><circle cx="1269.4" cy="653.5" r="3.5" fill="#3b80b8"/><circle cx="1278.3" cy="660.4" r="3.5" fill="#3b80b8"/><circle cx="1294.4" cy="607.1" r="3.5" fill="#3b80b8"/><circle cx="1325.9" cy="613.6" r="3.5" fill="#3b80b8"/><circle cx="1344.0" cy="663.4" r="3.5" fill="#3b80b8"/><circle cx="1355.7" cy="668.6" r="3.5" fill="#3b80b8"/><circle cx="1368.7" cy="611.7" r="3.5" fill="#3b80b8"/><circle cx="1392.3" cy="672.6" r="3.5" fill="#3b80b8"/><circle cx="1406.4" cy="602.6" r="3.5" fill="#3b80b8"/><circle cx="1432.7" cy="659.1" r="3.5" fill="#3b80b8"/><circle cx="1445.4" cy="551.8" r="3.5" fill="#3b80b8"/><circle cx="1471.4" cy="644.0" r="3.5" fill="#3b80b8"/><circle cx="1487.7" cy="574.8" r="3.5" fill="#3b80b8"/><circle cx="1503.2" cy="633.9" r="3.5" fill="#3b80b8"/><circle cx="1521.4" cy="576.4" r="3.5" fill="#3b80b8"/></svg>
<div class="t" style="left:315.5px;top:831.16px;font-size:16px;color:#555;letter-spacing:-0.476px;">KLIMATOLOGISCHE KENNTAGE</div>
<div class="t" style="left:742px;top:831.16px;font-size:16px;color:#555;letter-spacing:-0.849px;">TAGESSTATISTIKEN</div>
</body></html>
